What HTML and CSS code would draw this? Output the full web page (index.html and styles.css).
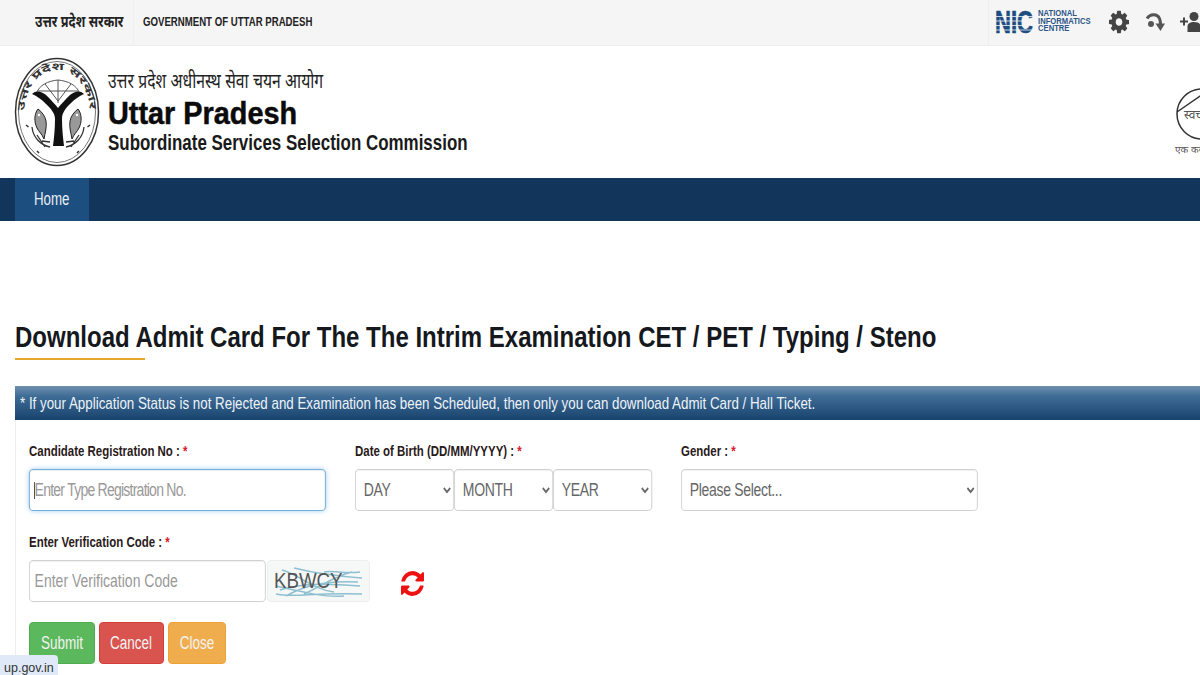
FILE: index.html
```html
<!DOCTYPE html>
<html lang="en">
<head>
<meta charset="utf-8">
<title>Download Admit Card</title>
<link rel="stylesheet" href="styles.css">
</head>
<body>
<div class="page">
  <div class="topbar">
    <div class="gov-left">
      <span class="gov-hi"><span class="sq">उत्तर प्रदेश सरकार</span></span>
      <span class="gov-en"><span class="sq">GOVERNMENT OF UTTAR PRADESH</span></span>
    </div>
    <div class="gov-right">
      <div class="nic">
        <svg class="nic-mark" width="38" height="24" viewBox="0 0 38 24">
          <text x="0" y="23" class="nic-letters" textLength="38" lengthAdjust="spacingAndGlyphs">NIC</text>
          <g class="nic-lines"><path d="M0 6.500H38M0 11H38M0 15.500H38M0 20H38"/></g>
        </svg>
        <div class="nic-text"><span class="sq">NATIONAL</span><span class="sq">INFORMATICS</span><span class="sq">CENTRE</span></div>
      </div>
      <svg class="ico-gear" width="20" height="26" viewBox="0 0 1536 1792" preserveAspectRatio="none"><path d="M1024 896q0-106-75-181t-181-75-181 75-75 181 75 181 181 75 181-75 75-181zm512-109v222q0 12-8 23t-20 13l-185 28q-19 54-39 91 35 50 107 138 10 12 10 25t-9 23q-27 37-99 108t-94 71q-12 0-26-9l-138-108q-44 23-91 38-16 136-29 186-7 28-36 28h-222q-14 0-24.5-8.5t-11.5-21.5l-28-184q-49-16-90-37l-141 107q-10 9-25 9-14 0-25-11-126-114-165-168-7-10-7-23 0-12 8-23 15-21 51-66.5t54-70.5q-27-50-41-99l-183-27q-13-2-21-12.5t-8-23.5v-222q0-12 8-23t19-13l186-28q14-46 39-92-40-57-107-138-10-12-10-24 0-10 9-23 26-36 98.5-107.5t94.5-71.5q13 0 26 10l138 107q44-23 91-38 16-136 29-186 7-28 36-28h222q14 0 24.5 8.5t11.5 21.5l28 184q49 16 90 37l142-107q9-9 24-9 13 0 25 10 129 119 165 170 7 8 7 22 0 12-8 23-15 21-51 66.5t-54 70.5q26 50 41 98l183 28q13 2 21 12.5t8 23.5z"/></svg>
      <svg class="ico-turn" width="20" height="22" viewBox="0 0 20 22">
        <circle cx="6" cy="13" r="3"/>
        <path class="turn-arc" d="M2 7.500C5 3 12 2 14.500 7.500C15.300 9.500 15.500 11 15.500 13"/>
        <path d="M10.500 12.500H20L15.500 20Z"/>
      </svg>
      <svg class="ico-users" width="30" height="24" viewBox="0 0 30 24">
        <path d="M0 11.500H8M4 7.500V15.500" class="plus"/>
        <circle cx="14" cy="6.500" r="4.500"/>
        <path d="M7.500 22V16.500C7.500 13.500 10 12 14 12S20.500 13.500 20.500 16.500V22Z"/>
        <circle cx="24" cy="5" r="4"/>
        <path d="M22 11.500H30V22H22Z"/>
      </svg>
    </div>
  </div>

  <header class="masthead">
    <svg class="emblem" width="86" height="112" viewBox="0 0 86 112">
      <ellipse class="em-line" cx="43" cy="55" rx="41.500" ry="53.500"/>
      <ellipse class="em-thin" cx="43" cy="55" rx="38.500" ry="50.500"/>
      <defs><path id="emblem-arc" d="M10 62C9 30 26 13 43 13S77 30 76 62"/></defs>
      <text class="em-text"><textPath href="#emblem-arc" startOffset="8" textLength="114" lengthAdjust="spacingAndGlyphs">उत्तर प्रदेश सरकार</textPath></text>
      <path class="em-bow" d="M22 37C25 28 34 24 44 23C54 24 63 28 66 37M44 23V46M31 27L44 44L57 27M24 34H64"/>
      <path d="M18 37C22 33 27 34 32 38C37 43 41 47 44 51C47 47 51 43 56 38C61 34 66 33 70 37C65 39 61 42 56 47C51 52 48 56 48 62C48 72 49 81 50 89H39C40 81 41 72 41 62C41 56 37 52 32 47C27 42 23 39 18 37Z"/>
      <path class="em-fish" d="M24 52C20 57 20 65 23 71C25 75 28 77 30 82C31 76 33 70 32 64C31 59 28 55 24 52Z"/>
      <path class="em-fish" d="M64 52C68 57 68 65 65 71C63 75 60 77 58 82C57 76 55 70 56 64C57 59 60 55 64 52Z"/>
      <circle cx="25" cy="58" r="1.200" class="em-eye"/><circle cx="63" cy="58" r="1.200" class="em-eye"/>
      <path class="em-fins" d="M18 70C19 80 26 88 36 90M70 70C69 80 62 88 52 90M23 78L31 90M65 78L57 90M28 84L36 85M60 84L52 85"/>
      <path class="em-dots" d="M12 68L14.500 70M76 68L73.500 70M23 94L25 96M65 94L63 96"/>
    </svg>
    <div class="brand">
      <div class="brand-hi"><span class="sq">उत्तर प्रदेश अधीनस्थ सेवा चयन आयोग</span></div>
      <div class="brand-name"><span class="sq">Uttar Pradesh</span></div>
      <div class="brand-sub"><span class="sq">Subordinate Services Selection Commission</span></div>
    </div>
    <div class="seal">
      <svg width="40" height="56" viewBox="0 0 40 56">
        <circle class="seal-ring" cx="27" cy="29" r="25"/>
        <path class="seal-ring" d="M2 27L28 9"/>
        <text x="9" y="34" class="seal-text">स्वच्छ</text>
      </svg>
      <div class="seal-cap">एक कदम</div>
    </div>
  </header>

  <nav class="navbar"><a class="nav-item"><span class="sq">Home</span></a></nav>

  <main class="content">
    <h1 class="title"><span class="sq">Download Admit Card For The The Intrim Examination CET / PET / Typing / Steno</span></h1>
    <div class="title-rule"></div>

    <section class="panel">
      <div class="panel-head"><span class="sq">* If your Application Status is not Rejected and Examination has been Scheduled, then only you can download Admit Card / Hall Ticket.</span></div>
      <form class="panel-body">
        <div class="form-row">
          <div class="field">
            <label class="label"><span class="sq">Candidate Registration No : <em>*</em></span></label>
            <div class="ctl">
              <input class="control focus reg" type="text" placeholder="Enter Type Registration No.">
              <span class="caret"></span>
            </div>
          </div>
          <div class="field">
            <label class="label"><span class="sq">Date of Birth (DD/MM/YYYY) : <em>*</em></span></label>
            <div class="dob">
              <div class="ctl"><select class="control"><option>DAY</option></select></div>
              <div class="ctl"><select class="control"><option>MONTH</option></select></div>
              <div class="ctl"><select class="control"><option>YEAR</option></select></div>
            </div>
          </div>
          <div class="field">
            <label class="label"><span class="sq">Gender : <em>*</em></span></label>
            <div class="ctl"><select class="control"><option>Please Select...</option></select></div>
          </div>
        </div>
        <div class="verify">
          <label class="label"><span class="sq">Enter Verification Code : <em>*</em></span></label>
          <div class="verify-row">
            <div class="ctl code-wrap"><input class="control code" type="text" placeholder="Enter Verification Code"></div>
            <div class="captcha">
              <svg class="captcha-noise" width="90" height="36" viewBox="0 0 90 36">
                <path d="M2 30C20 34 40 28 88 30M8 6C24 10 40 26 60 28M20 4C36 8 60 12 88 14M6 26C30 18 60 20 86 22M30 30C44 24 60 12 78 8M2 22C20 26 50 34 70 32M12 32C30 22 50 16 84 18M50 8C60 6 70 10 86 8"/>
              </svg>
              <span class="captcha-text"><span class="sq">KBWCY</span></span>
            </div>
            <svg class="refresh" width="23" height="29" viewBox="0 0 1536 1792" preserveAspectRatio="none"><path d="M1511 1056q0 5-1 7-64 268-268 434.500t-478 166.500q-146 0-282.500-55t-243.500-157l-129 129q-19 19-45 19t-45-19-19-45v-448q0-26 19-45t45-19h448q26 0 45 19t19 45-19 45l-137 137q71 66 161 102t187 36q134 0 250-65t186-179q11-17 53-117 8-23 30-23h192q13 0 22.500 9.500t9.500 22.500zm25-800v448q0 26-19 45t-45 19h-448q-26 0-45-19t-19-45 19-45l138-138q-148-137-349-137-134 0-250 65t-186 179q-11 17-53 117-8 23-30 23h-199q-13 0-22.500-9.500t-9.500-22.500v-7q65-268 270-434.500t480-166.500q146 0 284 55.500t245 156.500l130-129q19-19 45-19t45 19 19 45z"/></svg>
          </div>
        </div>
        <div class="actions">
          <button class="btn btn-green" type="button"><span class="sq">Submit</span></button>
          <button class="btn btn-red" type="button"><span class="sq">Cancel</span></button>
          <button class="btn btn-amber" type="button"><span class="sq">Close</span></button>
        </div>
      </form>
    </section>
  </main>
  <div class="status">up.gov.in</div>
</div>
</body>
</html>
```
FILE: styles.css
```css
* { box-sizing: border-box; }
html, body { margin: 0; padding: 0; background: #fff; }
body { font-family: "Liberation Sans", "Noto Sans", sans-serif; color: #111; }
.page { position: relative; width: 1200px; height: 675px; overflow: hidden; }
.sq { display: inline-block; white-space: nowrap; transform-origin: left center; transform: scaleX(.8); }

.topbar { display: flex; justify-content: space-between; height: 46px; background: #f5f5f5; border-bottom: 1px solid #eee; }
.gov-left { display: flex; align-items: center; padding-left: 35px; }
.gov-hi { width: 98px; padding-bottom: 3px; font-size: 16px; font-weight: 700; color: #222; white-space: nowrap; }
.gov-hi .sq { transform: scaleX(.79); }
.gov-en { padding: 0 0 2px 9px; height: 46px; display: flex; align-items: center; border-left: 1px solid #efefef; font-size: 12.500px; font-weight: 700; color: #222; }
.gov-en .sq { transform: scaleX(.77); }
.gov-right { display: flex; align-items: center; margin-right: -10px; padding: 0 0 2px 6px; border-left: 1px solid #eee; }
.nic { display: flex; align-items: center; gap: 5px; margin-right: 16px; }
.nic-letters { font-family: "Liberation Sans", sans-serif; font-size: 31px; font-weight: 700; fill: #1c4c80; stroke: #1c4c80; stroke-width: .7; }
.nic-lines path { stroke: #f5f5f5; stroke-width: .8; fill: none; }
.nic-text { display: flex; flex-direction: column; font-size: 9px; font-weight: 700; line-height: 7.500px; color: #2c5688; width: 55px; white-space: nowrap; }
.nic-text .sq { transform: scaleX(.85); }
.ico-gear { fill: #444; margin-right: 16px; }
.ico-turn { fill: #555; margin-right: 15px; }
.turn-arc { fill: none; stroke: #555; stroke-width: 3; }
.ico-users { fill: #444; }
.plus { stroke: #444; stroke-width: 2; fill: none; }

.masthead { display: flex; height: 132px; padding: 11px 0 0 14px; position: relative; }
.emblem { flex: none; fill: #111; }
.em-line { fill: none; stroke: #333; stroke-width: 1.500; }
.em-thin { fill: none; stroke: #555; stroke-width: .8; }
.em-text { font-family: "Noto Sans", "Noto Sans Devanagari", sans-serif; font-size: 10px; font-weight: 700; fill: #333; }
.em-bow { fill: none; stroke: #555; stroke-width: 1; }
.em-fish { fill: #999; stroke: #222; stroke-width: 1; }
.em-eye { fill: #fff; }
.em-fins { fill: none; stroke: #333; stroke-width: 1.300; }
.em-dots { fill: none; stroke: #333; stroke-width: 1.500; }
.brand { margin-left: 8px; padding-top: 11px; }
.brand-hi { font-size: 20px; line-height: 26px; color: #222; white-space: nowrap; }
.brand-hi .sq { transform: scaleX(.785); }
.brand-name { font-size: 31px; line-height: 36px; font-weight: 700; color: #0b0b0b; padding-top: 2px; -webkit-text-stroke: .5px #0b0b0b; }
.brand-name .sq { transform: scaleX(.93); }
.brand-sub { font-size: 22px; line-height: 24px; font-weight: 700; color: #1a1a1a; margin-top: -1px; }
.brand-sub .sq { transform: scaleX(.77); }
.seal { margin-left: auto; margin-right: -17px; padding-top: 28px; width: 42px; }
.seal svg { display: block; }
.seal-ring { fill: none; stroke: #333; stroke-width: 1.500; }
.seal-text { font-size: 12px; fill: #555; }
.seal-cap { font-size: 10px; color: #555; white-space: nowrap; margin-top: 1px; }

.navbar { display: flex; height: 43px; background: #12355b; padding-left: 15px; }
.nav-item { display: flex; align-items: center; width: 74px; padding-left: 19px; background: #1d4e80; color: #e8eef5; font-size: 18px; }
.nav-item .sq { transform: scaleX(.74); }

.content { padding: 100px 0 0 15px; }
.title { margin: 0; font-size: 30px; line-height: 32px; font-weight: 700; color: #15181c; white-space: nowrap; }
.title-rule { width: 130px; height: 2px; margin-top: 5px; background: #e3a62a; }
.panel { width: 1300px; margin-top: 26px; }
.panel-head { height: 34px; display: flex; align-items: center; padding: 2px 0 0 5px; color: #eef3f8; font-size: 17px; background: linear-gradient(#6f90ad, #3f6c96 30%, #17436d); }
.panel-head .sq { transform: scaleX(.785); }
.panel-body { padding: 23px 0 12px 13px; border-left: 1px solid #eee; }
.form-row { display: flex; gap: 29px; }
.field { width: 297px; display: flex; flex-direction: column; }
.label { display: block; height: 26px; font-size: 14.500px; line-height: 16px; font-weight: 700; color: #2a1a1a; }
.label .sq { transform: scaleX(.79); }
.label em { color: #d9202a; font-style: normal; }
.ctl { position: relative; flex: 1; min-width: 0; height: 42px; }
.control { display: block; width: 125%; height: 42px; padding: 0 4px 0 6px; border: 1px solid #ccc; border-radius: 5px; background: #fff; color: #666; font-family: "Liberation Sans", sans-serif; font-size: 17.500px; letter-spacing: -.4px; box-shadow: inset 0 1px 1px rgba(0,0,0,.06); outline: 0; transform: scaleX(.8); transform-origin: left center; }
.control::placeholder { color: #999; opacity: 1; }
.focus { border-color: #6aa7d8; box-shadow: inset 0 1px 1px rgba(0,0,0,.07), 0 0 6px rgba(102,175,233,.6); }
.reg { letter-spacing: -.95px; }
.caret { position: absolute; left: 5px; top: 13px; width: 1px; height: 17px; background: #555; }
.dob { display: flex; }
.verify { margin-top: 23px; }
.verify-row { display: flex; align-items: center; }
.code-wrap { flex: none; width: 237px; }
.code { letter-spacing: 0; }
.captcha { position: relative; width: 103px; height: 42px; margin-left: 1px; display: flex; align-items: center; padding-left: 6px; border: 1px solid #eee; border-radius: 4px; background: #f6f8f8; }
.captcha-noise { position: absolute; left: 6px; top: 3px; fill: none; stroke: #8dbfd0; stroke-width: 1.500; }
.captcha-text { position: relative; font-size: 22px; color: #555; }
.captcha-text .sq { transform: scaleX(.85); }
.refresh { fill: #ee1111; margin: 5px 0 0 31px; }
.actions { display: flex; gap: 4px; margin-top: 20px; }
.btn { height: 42px; border: 1px solid transparent; border-radius: 4px; color: #f2f2f2; font-family: "Liberation Sans", sans-serif; font-size: 18px; padding: 0; }
.btn .sq { transform-origin: center; transform: scaleX(.75); }
.btn-green { width: 66px; background: #5cb85c; border-color: #4cae4c; }
.btn-red { width: 65px; background: #d9534f; border-color: #d43f3a; }
.btn-amber { width: 58px; background: #f0ad4e; border-color: #eea236; }
.status { position: absolute; left: 0; bottom: 0; width: 58px; height: 20px; padding: 5px 0 0 4px; background: #dfe9f8; border-top-right-radius: 4px; font-size: 12.500px; line-height: 16px; color: #333; }
```
